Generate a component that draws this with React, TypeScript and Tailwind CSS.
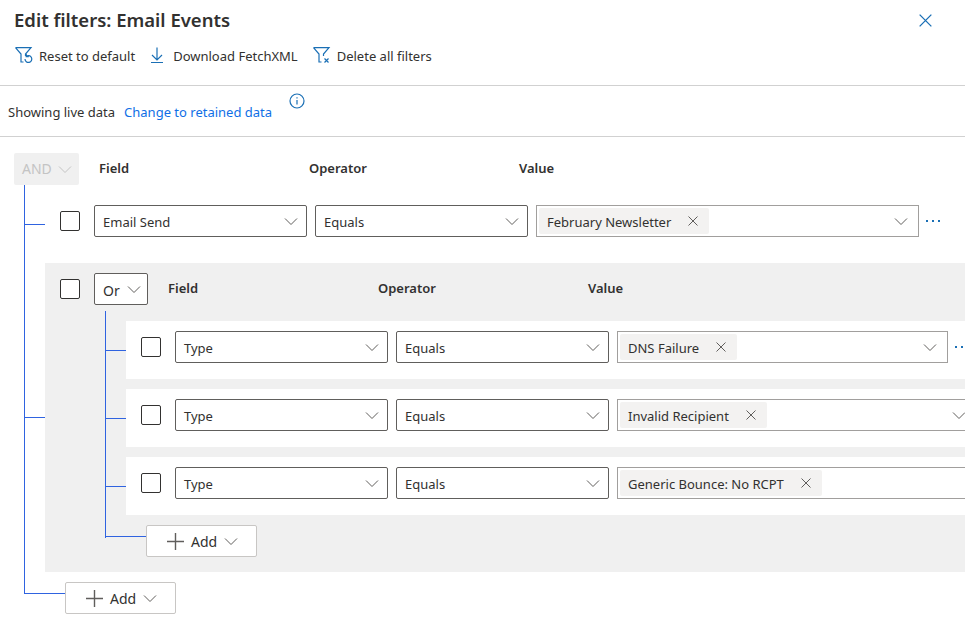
import { ReactNode } from "react";

const Chevron = ({ className = "text-[#605e5c]" }: { className?: string }) => (
  <svg width="14" height="9" viewBox="0 0 14 9" fill="none" stroke="currentColor" className={`shrink-0 ${className}`}>
    <path d="M1 1.5 L7 7.5 L13 1.5" />
  </svg>
);

const Cross = ({ size = 10, className = "text-[#605e5c]" }: { size?: number; className?: string }) => (
  <svg width={size} height={size} viewBox="0 0 10 10" fill="none" stroke="currentColor" className={className}>
    <path d="M0.5 0.5 L9.5 9.5 M9.5 0.5 L0.5 9.5" />
  </svg>
);

const Funnel = ({ children }: { children: ReactNode }) => (
  <svg width="18" height="18" viewBox="0 0 18 18" fill="none" stroke="#1a6fb5" strokeWidth="1.2" className="shrink-0">
    <path d="M0.5 0.6 H16 L10.5 7 V9 M0.5 0.6 L6 7 V15 H8.5" />
    {children}
  </svg>
);

const Checkbox = () => (
  <div className="w-[20px] h-[20px] shrink-0 mt-[6px] rounded-[2px] border border-[#323130] bg-white" />
);

const Stub = ({ width, top }: { width: string; top: string }) => (
  <div className={`${width} ${top} h-px shrink-0 bg-[#2f63e0]`} />
);

const Select = ({ label }: { label: string }) => (
  <div className="w-[213px] h-[32px] shrink-0 flex items-center justify-between pl-[8px] pr-[8px] rounded-[2px] border border-[#605e5c] bg-white">
    <span className="mt-[2px]">{label}</span>
    <Chevron />
  </div>
);

const ValueBox = ({ label, width }: { label: string; width: string }) => (
  <div className={`${width} h-[32px] shrink-0 flex items-center justify-between pl-[2px] pr-[10px] border border-[#a19f9d] bg-white`}>
    <div className="h-[26px] flex items-center pl-[8px] pr-[11px] gap-[17px] rounded-[2px] bg-[#f3f2f1]">
      <span className="mt-[2px]">{label}</span>
      <Cross />
    </div>
    <Chevron />
  </div>
);

const Dots = () => (
  <div className="shrink-0 ml-[7px] flex gap-[4px] h-[32px] items-center">
    <div className="w-[2px] h-[2px] bg-[#1a6fb5]" />
    <div className="w-[2px] h-[2px] bg-[#1a6fb5]" />
    <div className="w-[2px] h-[2px] bg-[#1a6fb5]" />
  </div>
);

const AddButton = () => (
  <div className="w-[111px] h-[32px] shrink-0 flex items-center pl-[20px] gap-[7px] rounded-[2px] border border-[#c8c6c4] bg-white text-[14px]">
    <svg width="17" height="17" viewBox="0 0 17 17" stroke="#605e5c" fill="none" className="shrink-0">
      <path d="M0 8.5 H17 M8.5 0 V17" strokeWidth="1.4" />
    </svg>
    <span className="mt-[2px]">Add</span>
    <Chevron />
  </div>
);

const Labels = ({ className }: { className: string }) => (
  <div className={`flex font-semibold ${className}`}>
    <span className="w-[210px]">Field</span>
    <span className="w-[210px]">Operator</span>
    <span className="w-[210px]">Value</span>
  </div>
);

const subRows = [
  { label: "DNS Failure", width: "w-[331px]", dots: true },
  { label: "Invalid Recipient", width: "w-[360px]", dots: false },
  { label: "Generic Bounce: No RCPT", width: "w-[400px]", dots: false },
];

export default function App() {
  return (
    <div className="w-[965px] h-[635px] overflow-hidden bg-white text-[#323130] text-[13px] leading-[20px] font-['Noto_Sans',sans-serif]">
      <div className="h-[86px] border-b border-[#d1d1d1] pt-[8px]">
        <div className="flex items-center justify-between pl-[14px] pr-[33px] h-[24px]">
          <h1 className="text-[18.5px] leading-[24px] font-semibold">Edit filters: Email Events</h1>
          <Cross size={13} className="text-[#1a6fb5]" />
        </div>
        <div className="flex items-center h-[32px] mt-[8px] pl-[15px]">
          <Funnel>
            <path d="M10 12 a3.4 3.4 0 1 0 1.2 -2.6 M11.2 7 V9.6 H13.8" />
          </Funnel>
          <span className="ml-[6px]">Reset to default</span>
          <svg width="14" height="18" viewBox="0 0 14 18" fill="none" stroke="#1a6fb5" strokeWidth="1.2" className="ml-[15px]">
            <path d="M7 0.5 V13 M2 8 L7 13 L12 8 M1 15.5 H13" />
          </svg>
          <span className="ml-[9px]">Download FetchXML</span>
          <div className="ml-[15px]">
            <Funnel>
              <path d="M11.5 11.5 L15.5 15.5 M15.5 11.5 L11.5 15.5" />
            </Funnel>
          </div>
          <span className="ml-[6px]">Delete all filters</span>
        </div>
      </div>

      <div className="h-[51px] border-b border-[#d1d1d1] flex pl-[8px]">
        <span className="mt-[16px]">Showing live data</span>
        <span className="mt-[16px] ml-[9px] text-[#0f6fe6]">Change to retained data</span>
        <svg width="16" height="16" viewBox="0 0 16 16" fill="none" stroke="#1a6fb5" strokeWidth="1.2" className="ml-[17px] mt-[7px]">
          <circle cx="8" cy="8" r="7" />
          <path d="M8 7 V11.5 M8 4.2 V5.4" />
        </svg>
      </div>

      <div className="flex pt-[16px] pl-[14px] h-[48px]">
        <div className="w-[65px] h-[32px] flex items-center justify-between pl-[8px] pr-[7px] rounded-[2px] bg-[#f0f0f0] text-[#c4c4c4] text-[14px]">
          <span>AND</span>
          <Chevron className="text-[#c4c4c4]" />
        </div>
        <Labels className="ml-[20px] mt-[5px]" />
      </div>

      <div className="ml-[24px] h-[409px] border-l border-[#2f63e0] pt-[20px]">
        <div className="flex">
          <Stub width="w-[20px]" top="mt-[19px]" />
          <div className="ml-[15px]">
            <Checkbox />
          </div>
          <div className="ml-[14px] flex gap-[8px]">
            <Select label="Email Send" />
            <Select label="Equals" />
            <ValueBox label="February Newsletter" width="w-[383px]" />
          </div>
          <Dots />
        </div>

        <div className="flex items-center mt-[26px]">
          <Stub width="w-[20px]" top="mt-0" />
          <div className="flex-1 min-w-0 h-[309px] bg-[#f0f0f0] pt-[10px] overflow-hidden">
            <div className="flex pl-[15px]">
              <Checkbox />
              <div className="ml-[14px] w-[54px] h-[32px] flex items-center justify-between pl-[8px] pr-[6px] rounded-[2px] border border-[#605e5c] bg-white">
                <span className="text-[14px] mt-[3px]">Or</span>
                <Chevron />
              </div>
              <Labels className="ml-[20px] mt-[5px]" />
            </div>

            <div className="ml-[60px] mt-[6px] h-[227px] border-l border-[#2f63e0] pt-[10px] flex flex-col gap-[10px]">
              {subRows.map((row) => (
                <div key={row.label} className="flex">
                  <Stub width="w-[20px]" top="mt-[29px]" />
                  <div className="flex-1 min-w-0 h-[58px] bg-white flex pt-[10px] pl-[15px] overflow-hidden">
                    <Checkbox />
                    <div className="ml-[14px] flex gap-[8px]">
                      <Select label="Type" />
                      <Select label="Equals" />
                      <ValueBox label={row.label} width={row.width} />
                    </div>
                    {row.dots && <Dots />}
                  </div>
                </div>
              ))}
              <div className="flex">
                <Stub width="w-[40px]" top="mt-[11px]" />
                <AddButton />
              </div>
            </div>
          </div>
        </div>

        <div className="flex mt-[10px]">
          <Stub width="w-[40px]" top="mt-[11px]" />
          <AddButton />
        </div>
      </div>
    </div>
  );
}
